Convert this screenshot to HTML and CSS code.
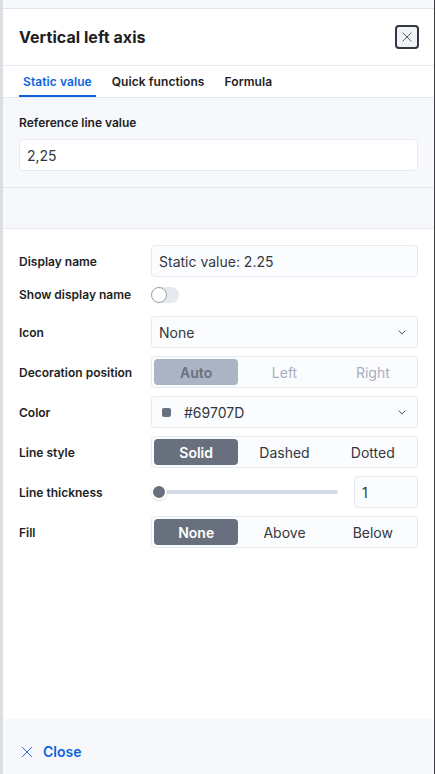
FILE: index.html
```html
<!DOCTYPE html>
<html lang="en">
<head>
<meta charset="utf-8">
<title>Vertical left axis</title>
<link rel="stylesheet" href="styles.css">
</head>
<body>
<div class="frame">
  <div class="edge"></div>
  <div class="panel">
    <div class="topstrip"></div>
    <header class="head">
      <h2 class="title">Vertical left axis</h2>
      <button class="xbtn" aria-label="Close">
        <svg width="14" height="14" viewBox="0 0 16 16"><path d="M3 3 L13 13 M13 3 L3 13" stroke="#535966" stroke-width="1.1" fill="none"/></svg>
      </button>
    </header>
    <nav class="tabs">
      <span class="tab active">Static value</span>
      <span class="tab">Quick functions</span>
      <span class="tab">Formula</span>
    </nav>
    <section class="refsec">
      <div class="lbl">Reference line value</div>
      <div class="field white">2,25</div>
    </section>
    <section class="spacer"></section>
    <section class="form">
      <div class="row">
        <div class="rlbl">Display name</div>
        <div class="field">Static value: 2.25</div>
      </div>
      <div class="row srow">
        <div class="rlbl">Show display name</div>
        <div class="switch"><span class="knob"></span></div>
      </div>
      <div class="row">
        <div class="rlbl">Icon</div>
        <div class="field sel">None
          <svg class="chev" width="12" height="12" viewBox="0 0 16 16"><path d="M3.5 6 L8 10.5 L12.5 6" stroke="#343741" stroke-width="1.2" fill="none"/></svg>
        </div>
      </div>
      <div class="row">
        <div class="rlbl">Decoration position</div>
        <div class="group disabled">
          <span class="gbtn on">Auto</span>
          <span class="gbtn">Left</span>
          <span class="gbtn">Right</span>
        </div>
      </div>
      <div class="row">
        <div class="rlbl">Color</div>
        <div class="field sel swsel"><span class="swatch"></span>#69707D
          <svg class="chev" width="12" height="12" viewBox="0 0 16 16"><path d="M3.5 6 L8 10.5 L12.5 6" stroke="#343741" stroke-width="1.2" fill="none"/></svg>
        </div>
      </div>
      <div class="row">
        <div class="rlbl">Line style</div>
        <div class="group">
          <span class="gbtn on">Solid</span>
          <span class="gbtn">Dashed</span>
          <span class="gbtn">Dotted</span>
        </div>
      </div>
      <div class="row">
        <div class="rlbl">Line thickness</div>
        <div class="slider">
          <div class="track"><span class="thumb"></span></div>
          <div class="field num">1</div>
        </div>
      </div>
      <div class="row">
        <div class="rlbl">Fill</div>
        <div class="group">
          <span class="gbtn on">None</span>
          <span class="gbtn">Above</span>
          <span class="gbtn">Below</span>
        </div>
      </div>
    </section>
    <footer class="foot">
      <span class="closelink">
        <svg width="14" height="14" viewBox="0 0 16 16"><path d="M2.5 2.5 L13.5 13.5 M13.5 2.5 L2.5 13.5" stroke="#0b64dd" stroke-width="1.1" fill="none"/></svg>
        Close
      </span>
    </footer>
  </div>
</div>
</body>
</html>
```

FILE: styles.css
```css
* { box-sizing: border-box; }
html, body { margin: 0; padding: 0; }
body {
  background: #ffffff;
  font-family: Inter, "Noto Sans", "Liberation Sans", sans-serif;
  color: #1d1e24;
  width: 436px;
  height: 774px;
  overflow: hidden;
}
.frame {
  display: flex;
  height: 774px;
}
.edge {
  width: 3px;
  background: #dcdde0;
  flex: none;
}
.panel {
  width: 432px;
  flex: none;
  display: flex;
  flex-direction: column;
  border-right: 1px solid #3a3d45;
  background: #ffffff;
}
.topstrip {
  height: 9px;
  flex: none;
  background: #f7f8fc;
  border-bottom: 1px solid #dfe4ee;
}
.head {
  height: 57px;
  flex: none;
  display: flex;
  align-items: center;
  justify-content: space-between;
  padding: 0 15px 0 16px;
  border-bottom: 1px solid #e3e8f2;
}
.title {
  margin: 0;
  font-size: 16px;
  font-weight: 700;
  letter-spacing: 0.05px;
  color: #1d1e24;
}
.xbtn {
  width: 24px;
  height: 24px;
  padding: 0;
  display: flex;
  align-items: center;
  justify-content: center;
  border: 2px solid #343741;
  border-radius: 4px;
  background: #f1f2f5;
}
.tabs {
  height: 32px;
  flex: none;
  display: flex;
  gap: 12px;
  padding: 0 16px;
  border-bottom: 1px solid #e3e8f2;
}
.tab {
  display: flex;
  align-items: center;
  padding: 2px 4px 0;
  font-size: 12px;
  font-weight: 600;
  letter-spacing: 0.08px;
  color: #1d1e24;
  border-bottom: 2px solid transparent;
}
.tab.active {
  color: #0b64dd;
  border-bottom-color: #0b64dd;
}
.refsec {
  flex: none;
  background: #f7f8fc;
  padding: 17px 16px 16px;
  border-bottom: 1px solid #e3e8f2;
}
.lbl {
  font-size: 12px;
  font-weight: 600;
  line-height: 16px;
  margin-bottom: 8px;
}
.field {
  height: 32px;
  display: flex;
  align-items: center;
  padding: 0 7px;
  font-size: 14px;
  color: #343741;
  background: #fbfcfd;
  border: 1px solid #e6eaf1;
  border-radius: 4px;
  flex: 1;
}
.field.white { background: #ffffff; }
.spacer {
  height: 41px;
  flex: none;
  background: #f7f8fc;
  border-bottom: 1px solid #e3e8f2;
}
.form {
  flex: 1;
  padding: 16px 16px 0;
  display: flex;
  flex-direction: column;
  gap: 8px;
}
.row {
  display: flex;
  align-items: center;
  height: 32px;
}
.srow {
  height: 23px;
  margin-top: -2px;
  margin-bottom: 2px;
  align-items: flex-start;
  padding-top: 4px;
}
.rlbl {
  width: 132px;
  flex: none;
  font-size: 12px;
  font-weight: 600;
  color: #1d1e24;
}
.srow .rlbl { line-height: 16px; }
.switch {
  width: 28px;
  height: 16px;
  border-radius: 8px;
  background: #e6e9ef;
  position: relative;
}
.knob {
  position: absolute;
  left: 0;
  top: 0;
  width: 16px;
  height: 16px;
  border-radius: 50%;
  background: #ffffff;
  border: 1px solid #9aa1ad;
}
.sel {
  justify-content: space-between;
}
.sel .chev { margin-right: 2px; }
.swsel { justify-content: flex-start; }
.swsel .chev { margin-left: auto; }
.swatch {
  width: 9px;
  height: 9px;
  border-radius: 2px;
  background: #69707d;
  margin: 0 13px 0 3px;
}
.group {
  flex: 1;
  height: 32px;
  display: flex;
  gap: 4px;
  padding: 2px;
  border: 1px solid #e6eaf1;
  border-radius: 4px;
  background: #fbfcfd;
}
.gbtn {
  flex: 1;
  display: flex;
  align-items: center;
  justify-content: center;
  font-size: 14px;
  color: #343741;
  border-radius: 4px;
}
.gbtn.on {
  background: #69707d;
  color: #ffffff;
  font-weight: 600;
}
.group.disabled .gbtn { color: #a7afbe; }
.group.disabled .gbtn.on {
  background: #abb4c4;
  color: #69707d;
}
.slider {
  flex: 1;
  display: flex;
  align-items: center;
  gap: 16px;
}
.track {
  flex: 1;
  height: 4px;
  background: #d3dae6;
  border-radius: 2px;
  position: relative;
  margin-left: 2px;
}
.thumb {
  position: absolute;
  left: -2px;
  top: -6px;
  width: 16px;
  height: 16px;
  border-radius: 50%;
  background: #69707d;
  border: 2px solid #ffffff;
  box-shadow: 0 1px 2px rgba(0,0,0,0.15);
}
.num {
  flex: none;
  width: 64px;
}
.foot {
  height: 55px;
  flex: none;
  background: #f7f8fc;
  padding: 25px 16px 0 17px;
}
.closelink {
  display: flex;
  align-items: center;
  gap: 9px;
  font-size: 14px;
  font-weight: 600;
  color: #0b64dd;
  line-height: 16px;
}
```
